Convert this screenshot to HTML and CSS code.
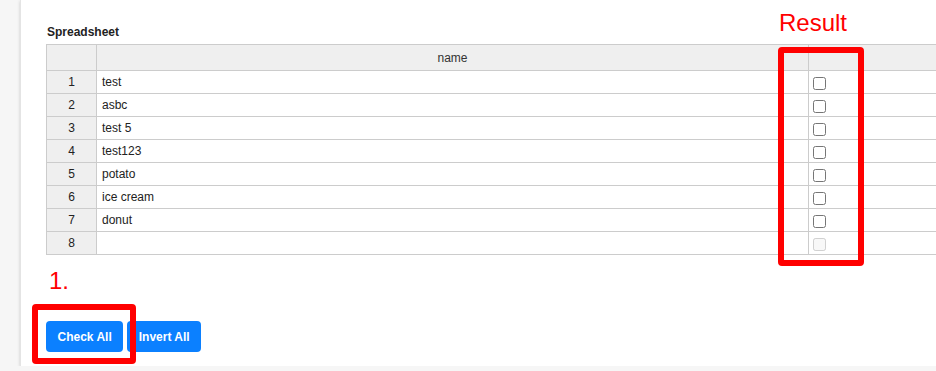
FILE: index.html
```html
<!DOCTYPE html>
<html lang="en">

<head>
    <meta charset="UTF-8">
    <title>Spreadsheet</title>
    <meta name="viewport" content="width=device-width, initial-scale=1.0">
    <link rel="stylesheet" href="styles.css">
</head>

<body>

    <div class="panel">
        <h4 class="title">Spreadsheet</h4>

        <table class="sheet">
            <colgroup>
                <col class="col-num">
                <col class="col-name">
                <col class="col-check">
            </colgroup>
            <thead>
                <tr>
                    <th></th>
                    <th>name</th>
                    <th></th>
                </tr>
            </thead>
            <tbody>
                <tr><td class="num">1</td><td>test</td><td class="check"><input type="checkbox"></td></tr>
                <tr><td class="num">2</td><td>asbc</td><td class="check"><input type="checkbox"></td></tr>
                <tr><td class="num">3</td><td>test 5</td><td class="check"><input type="checkbox"></td></tr>
                <tr><td class="num">4</td><td>test123</td><td class="check"><input type="checkbox"></td></tr>
                <tr><td class="num">5</td><td>potato</td><td class="check"><input type="checkbox"></td></tr>
                <tr><td class="num">6</td><td>ice cream</td><td class="check"><input type="checkbox"></td></tr>
                <tr><td class="num">7</td><td>donut</td><td class="check"><input type="checkbox"></td></tr>
                <tr><td class="num">8</td><td></td><td class="check"><input type="checkbox" disabled></td></tr>
            </tbody>
        </table>

        <div class="actions">
            <button class="btn">Check All</button>
            <button class="btn">Invert All</button>
        </div>
    </div>

    <!-- annotations drawn over the screenshot -->
    <div class="note note-result">Result</div>
    <div class="mark mark-result"></div>
    <div class="note note-step">1.</div>
    <div class="mark mark-step"></div>

</body>

</html>
```

FILE: styles.css
```css
html {
    overflow: hidden;
}

body {
    margin: 0;
    background: #f6f6f6;
    font-family: "Liberation Sans", Arial, sans-serif;
    color: #222;
    position: relative;
}

.panel {
    margin-left: 20px;
    background: #fff;
    border-left: 1px solid #e4e4e4;
    padding: 25px 0 14px 25px;
    box-shadow: 0 1px 3px rgba(0, 0, 0, 0.18);
    overflow: hidden;
}

.title {
    margin: 0 0 5px 1px;
    font-size: 12px;
    line-height: 14px;
    font-weight: bold;
    color: #222;
}

.sheet {
    border-collapse: collapse;
    table-layout: fixed;
    width: 1000px;
    font-size: 12px;
}

.col-num {
    width: 50px;
}

.col-name {
    width: 712px;
}

.sheet th,
.sheet td {
    border: 1px solid #ccc;
    padding: 0 5px;
    height: 22px;
    line-height: 22px;
    white-space: nowrap;
}

.sheet th {
    height: 25px;
    background: #efefef;
    font-weight: normal;
    color: #333;
    text-align: center;
}

.sheet td.num {
    background: #efefef;
    text-align: center;
    padding: 0;
}

.sheet td.check {
    padding: 0;
}

.sheet td.check input {
    display: block;
    margin: 2px 0 0 4px;
    width: 13px;
    height: 13px;
}

.actions {
    display: flex;
    gap: 4px;
    margin-top: 66px;
}

.btn {
    height: 31px;
    padding: 0 11.5px;
    border: none;
    border-radius: 4px;
    background: #0b80ff;
    color: #fff;
    font-family: "Liberation Sans", Arial, sans-serif;
    font-size: 12px;
    font-weight: bold;
}

.note {
    position: absolute;
    color: #ff0000;
    font-size: 24px;
    line-height: 28px;
}

.note-result {
    left: 779px;
    top: 9px;
}

.note-step {
    left: 49px;
    top: 267px;
}

.mark {
    position: absolute;
    border: 6px solid #ff0000;
    border-radius: 4px;
    box-sizing: border-box;
}

.mark-result {
    left: 778px;
    top: 47px;
    width: 86px;
    height: 219px;
}

.mark-step {
    left: 32px;
    top: 304px;
    width: 104px;
    height: 60px;
}
```
